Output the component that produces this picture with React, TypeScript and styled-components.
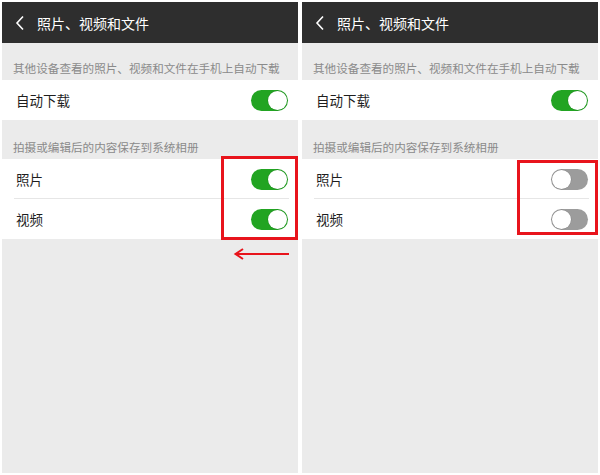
import React from "react"
import styled, { createGlobalStyle } from "styled-components"

const GlobalStyle = createGlobalStyle`
  html, body {
    margin: 0;
    padding: 0;
    background: #ffffff;
  }
  body {
    font-family: "Noto Sans CJK SC", "Noto Sans", sans-serif;
  }
`

const Page = styled.div`
  display: flex;
  gap: 4px;
  padding: 2px;
  width: 600px;
  height: 475px;
  box-sizing: border-box;
`

const Phone = styled.div`
  position: relative;
  width: 296px;
  height: 471px;
  background: #ebebeb;
  display: flex;
  flex-direction: column;
`

const Header = styled.div`
  height: 41px;
  background: #2e2e2e;
  display: flex;
  align-items: center;
  padding-left: 13px;
  gap: 12px;
  color: #ffffff;
  font-size: 14px;
  flex-shrink: 0;
`

const Caption = styled.div<{ $h: number }>`
  height: ${p => p.$h}px;
  display: flex;
  align-items: flex-end;
  padding: 0 0 4px 11px;
  box-sizing: border-box;
  font-size: 11.6px;
  color: #8a8a8a;
`

const Group = styled.div`
  background: #ffffff;
  display: flex;
  flex-direction: column;
`

const Row = styled.div<{ $divider?: boolean }>`
  position: relative;
  height: 40px;
  display: flex;
  align-items: center;
  justify-content: space-between;
  padding: 0 10px 0 14px;
  font-size: 13.5px;
  color: #1e1e1e;
  &::after {
    content: "";
    display: ${p => (p.$divider ? "block" : "none")};
    position: absolute;
    left: 12px;
    right: 9px;
    bottom: 0;
    height: 1px;
    background: #e6e6e6;
  }
`

const Toggle = styled.div<{ $on: boolean }>`
  width: 37px;
  height: 21px;
  border-radius: 11px;
  background: ${p => (p.$on ? "#22a422" : "#9c9c9c")};
  display: flex;
  align-items: center;
  justify-content: ${p => (p.$on ? "flex-end" : "flex-start")};
  padding: 0 1px;
  box-sizing: border-box;
`

const Knob = styled.div`
  width: 19px;
  height: 19px;
  border-radius: 50%;
  background: #ffffff;
  box-shadow: 0 0 0 0.5px rgba(0, 0, 0, 0.15);
`

const Highlight = styled.div<{ $l: number; $t: number; $w: number; $h: number }>`
  position: absolute;
  left: ${p => p.$l}px;
  top: ${p => p.$t}px;
  width: ${p => p.$w}px;
  height: ${p => p.$h}px;
  border: 3px solid #e8141c;
  box-sizing: border-box;
`

const Arrow = styled.svg`
  position: absolute;
  left: 231px;
  top: 244px;
`

const Back = () => (
  <svg width="10" height="16" viewBox="0 0 10 16">
    <path d="M8 1.5 L2 8 L8 14.5" stroke="#ffffff" strokeWidth="1.6" fill="none" />
  </svg>
)

function Screen({ saveOn, box }: { saveOn: boolean; box: { l: number; t: number; w: number; h: number } }) {
  return (
    <Phone>
      <Header>
        <Back />
        <span>照片、视频和文件</span>
      </Header>
      <Caption $h={37}>其他设备查看的照片、视频和文件在手机上自动下载</Caption>
      <Group>
        <Row>
          自动下载
          <Toggle $on>
            <Knob />
          </Toggle>
        </Row>
      </Group>
      <Caption $h={39}>拍摄或编辑后的内容保存到系统相册</Caption>
      <Group>
        <Row $divider>
          照片
          <Toggle $on={saveOn}>
            <Knob />
          </Toggle>
        </Row>
        <Row>
          视频
          <Toggle $on={saveOn}>
            <Knob />
          </Toggle>
        </Row>
      </Group>
      <Highlight $l={box.l} $t={box.t} $w={box.w} $h={box.h} />
      {saveOn && (
        <Arrow width="58" height="16" viewBox="0 0 58 16">
          <path d="M3 8 H56" stroke="#e8141c" strokeWidth="2" />
          <path d="M10 3 L2.5 8 L10 13" stroke="#e8141c" strokeWidth="2" fill="none" />
        </Arrow>
      )}
    </Phone>
  )
}

export default function App() {
  return (
    <>
      <GlobalStyle />
      <Page>
        <Screen saveOn box={{ l: 219, t: 154, w: 77, h: 84 }} />
        <Screen saveOn={false} box={{ l: 215, t: 158, w: 81, h: 75 }} />
      </Page>
    </>
  )
}
